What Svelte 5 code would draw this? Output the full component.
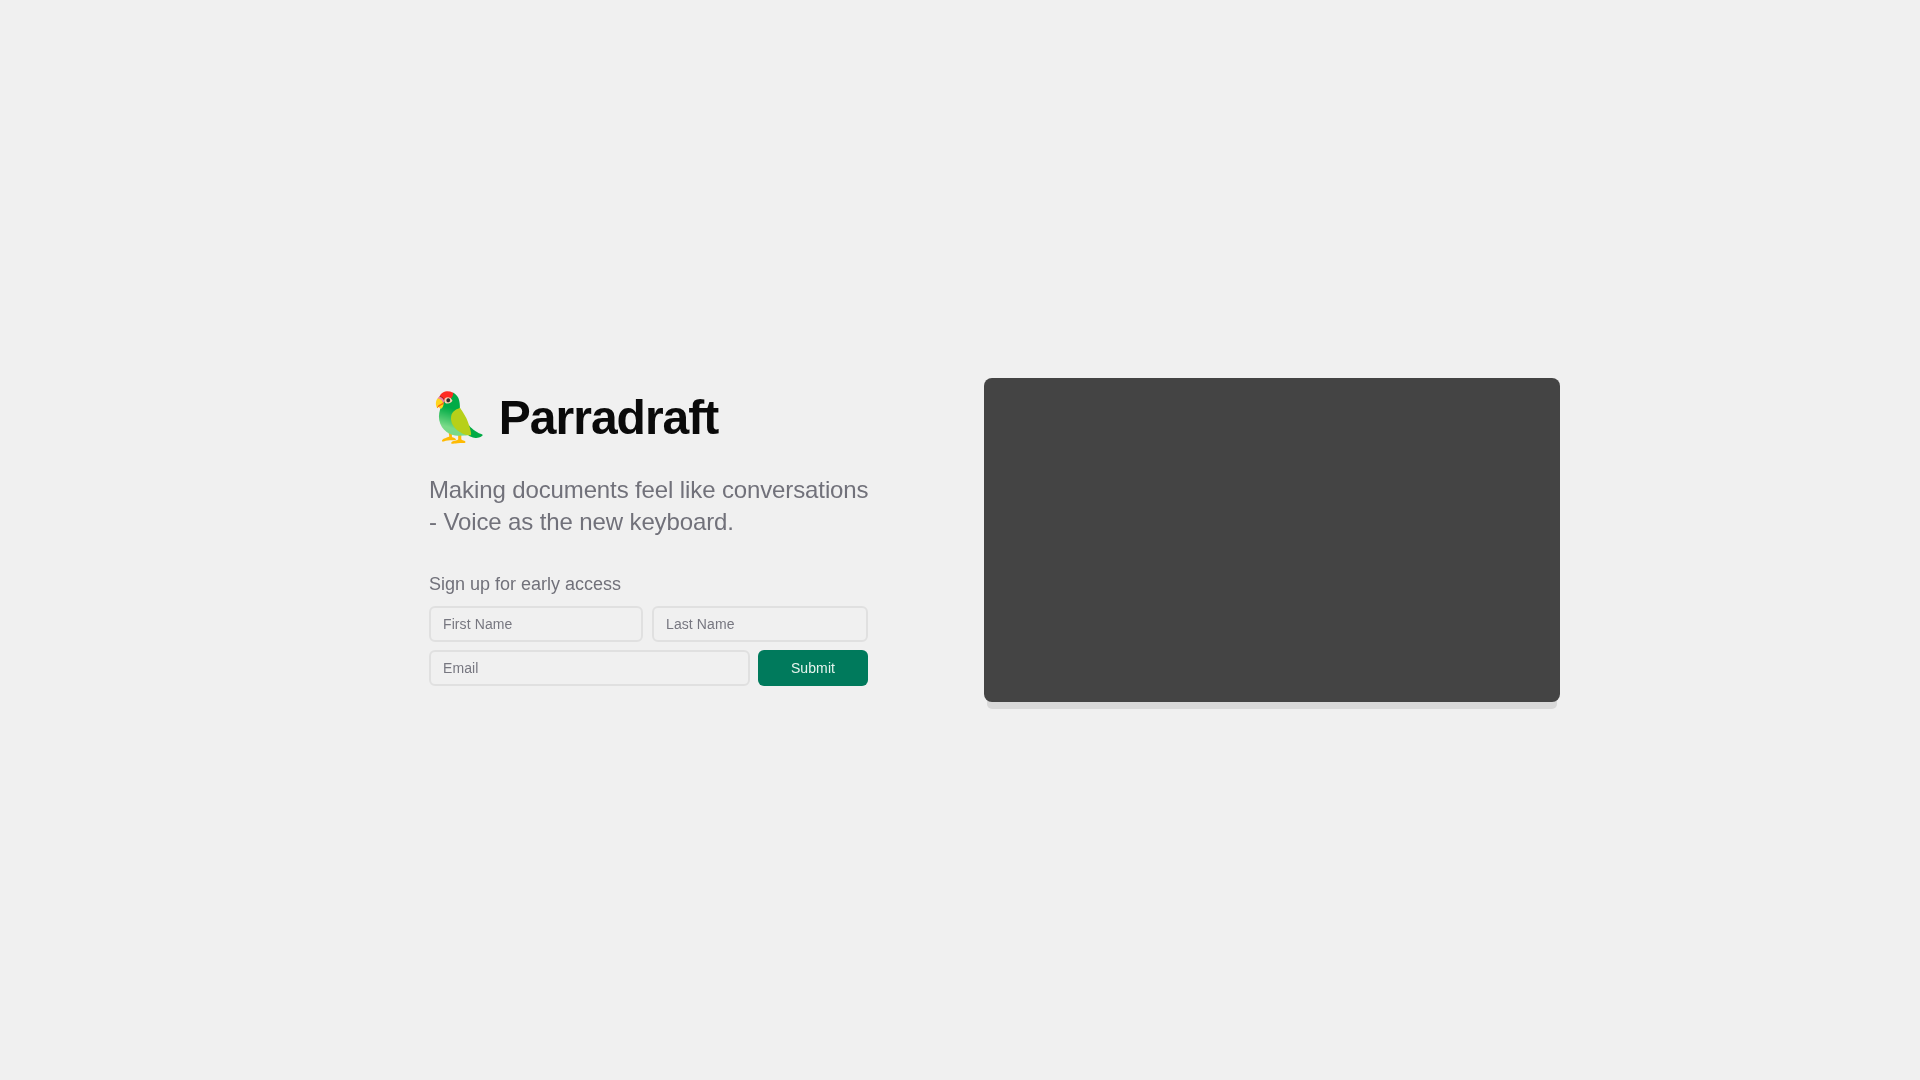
<script>
  let firstName = $state('');
  let lastName = $state('');
  let email = $state('');
</script>

<main class="page">
  <div class="wrap">
    <section class="intro">
      <h1><span class="bird">🦜</span> Parradraft</h1>
      <p class="tagline">Making documents feel like conversations<br />- Voice as the new keyboard.</p>
      <p class="signup">Sign up for early access</p>
      <form class="form" onsubmit={(e) => e.preventDefault()}>
        <div class="row names">
          <input type="text" placeholder="First Name" bind:value={firstName} />
          <input type="text" placeholder="Last Name" bind:value={lastName} />
        </div>
        <div class="row">
          <input type="email" placeholder="Email" bind:value={email} />
          <button type="submit">Submit</button>
        </div>
      </form>
    </section>
    <div class="video"></div>
  </div>
</main>

<style>
  :global(body) {
    background: #f0f0f0;
    font-family: "Liberation Sans", Arial, sans-serif;
  }

  .page {
    min-height: 100vh;
    display: flex;
    align-items: center;
    justify-content: center;
  }

  .wrap {
    width: 1200px;
    display: grid;
    grid-template-columns: 1fr 1fr;
    gap: 48px;
    align-items: center;
  }

  .intro {
    width: 439px;
    justify-self: center;
    will-change: transform;
  }

  h1 {
    margin: 0 0 32px;
    font-size: 48px;
    line-height: 48px;
    font-weight: 700;
    letter-spacing: -1px;
    color: #0a0a0a;
    white-space: nowrap;
  }

  .bird {
    margin: 0 -1.5px 0 0;
  }

  .tagline {
    margin: 0 0 32px;
    font-size: 24px;
    line-height: 32px;
    letter-spacing: -0.12px;
    color: #71717a;
    white-space: nowrap;
  }

  .signup {
    margin: 0 0 8px;
    font-size: 18px;
    line-height: 28px;
    color: #71717a;
  }

  .form {
    display: flex;
    flex-direction: column;
    gap: 8px;
  }

  .row {
    display: flex;
    gap: 8px;
  }

  .names {
    display: grid;
    grid-template-columns: 214px 1fr;
    gap: 9px;
  }

  input {
    flex: 1;
    width: 0;
    min-width: 0;
    height: 36px;
    box-sizing: border-box;
    padding: 0 12px;
    border: 2px solid #e0e0e0;
    border-radius: 6px;
    background: transparent;
    font: inherit;
    font-size: 14px;
    letter-spacing: 0.1px;
    color: #0a0a0a;
  }

  .names input {
    width: 100%;
  }

  input::placeholder {
    color: #777780;
    opacity: 1;
  }

  button {
    width: 110px;
    height: 36px;
    border: none;
    border-radius: 6px;
    background: #007a5c;
    color: #e6f4ee;
    font: inherit;
    font-size: 14px;
    letter-spacing: 0.1px;
  }

  .video {
    width: 576px;
    height: 324px;
    border-radius: 8px;
    background: #444444;
    box-shadow: 0 10px 0 -3px #d9d9d9;
  }
</style>
